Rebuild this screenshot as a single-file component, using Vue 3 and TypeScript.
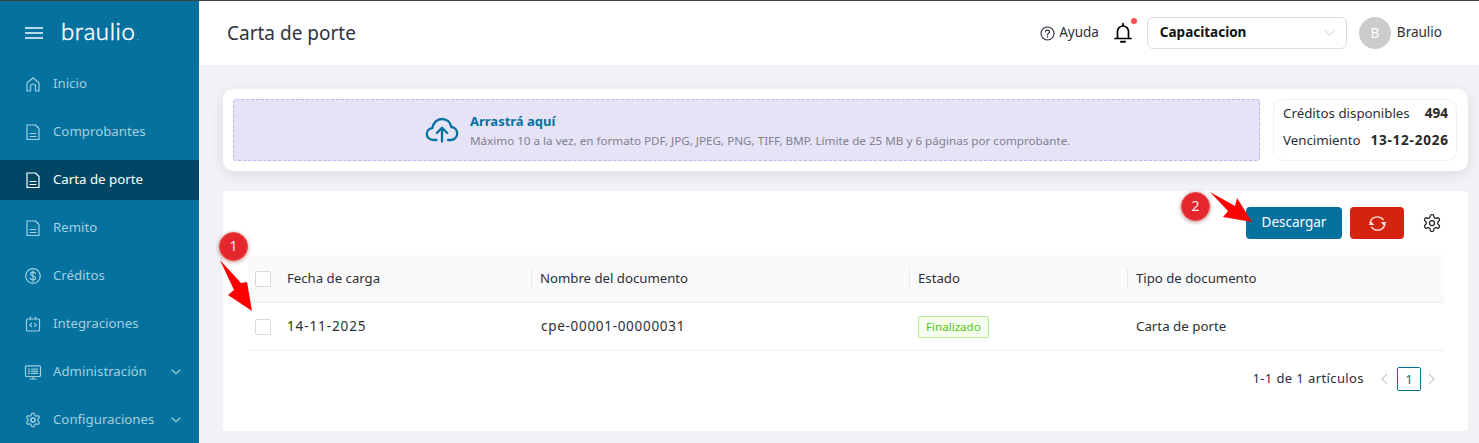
<script setup lang="ts">
interface NavItem { label: string; icon: string; active?: boolean; caret?: boolean }
const nav: NavItem[] = [
  { label: 'Inicio', icon: 'home' },
  { label: 'Comprobantes', icon: 'doc' },
  { label: 'Carta de porte', icon: 'doc', active: true },
  { label: 'Remito', icon: 'doc' },
  { label: 'Créditos', icon: 'dollar' },
  { label: 'Integraciones', icon: 'code' },
  { label: 'Administración', icon: 'admin', caret: true },
  { label: 'Configuraciones', icon: 'gear', caret: true },
]
const gearPath = 'M12.220 2h-.44a2 2 0 0 0-2 2v.18a2 2 0 0 1-1 1.730l-.43.25a2 2 0 0 1-2 0l-.15-.08a2 2 0 0 0-2.730.73l-.22.38a2 2 0 0 0 .73 2.730l.15.1a2 2 0 0 1 1 1.720v.51a2 2 0 0 1-1 1.740l-.15.09a2 2 0 0 0-.73 2.730l.22.38a2 2 0 0 0 2.730.73l.15-.08a2 2 0 0 1 2 0l.43.25a2 2 0 0 1 1 1.730V20a2 2 0 0 0 2 2h.44a2 2 0 0 0 2-2v-.18a2 2 0 0 1 1-1.730l.43-.25a2 2 0 0 1 2 0l.15.08a2 2 0 0 0 2.730-.73l.22-.39a2 2 0 0 0-.73-2.730l-.15-.08a2 2 0 0 1-1-1.740v-.5a2 2 0 0 1 1-1.740l.15-.09a2 2 0 0 0 .73-2.730l-.22-.38a2 2 0 0 0-2.730-.73l-.15.08a2 2 0 0 1-2 0l-.43-.25a2 2 0 0 1-1-1.730V4a2 2 0 0 0-2-2z'
</script>

<template>
  <div class="page">
    <aside class="sidebar">
      <div class="brand">
        <div class="burger"><span></span><span></span><span></span></div>
        <span class="logo">braulio<i>.</i></span>
      </div>
      <nav class="nav">
        <div v-for="item in nav" :key="item.label" class="nav-item" :class="{ active: item.active }">
          <svg v-if="item.icon === 'gear'" class="nav-icon" viewBox="-2.400 -2.400 28.800 28.800" fill="none" stroke="currentColor" stroke-width="1.700" stroke-linejoin="round">
            <path :d="gearPath" />
            <circle cx="12" cy="12" r="3" stroke-width="2.200" />
          </svg>
          <svg v-else class="nav-icon" viewBox="0 0 20 20" fill="none" stroke="currentColor" stroke-width="1.200" stroke-linejoin="round" stroke-linecap="round">
            <template v-if="item.icon === 'home'">
              <path d="M4 17V9L10 3.800 16 9v8h-3.500v-4.500a2.500 2.500 0 0 0-5 0V17z" />
            </template>
            <template v-else-if="item.icon === 'doc'">
              <path d="M4 3h8.500L16 6.500V17.500H4z" />
              <path d="M7 11.500h6M7 14.500h6" />
            </template>
            <template v-else-if="item.icon === 'dollar'">
              <circle cx="10" cy="10" r="7.300" />
              <path d="M12.500 7.500C12 6.500 11 6.200 10 6.200c-1.500 0-2.500.7-2.500 1.900 0 2.700 5.100 1.100 5.100 3.800 0 1.200-1.100 1.900-2.600 1.900-1.200 0-2.300-.4-2.800-1.500M10 4.800v10.400" />
            </template>
            <template v-else-if="item.icon === 'code'">
              <rect x="3.500" y="5" width="13" height="12" rx="1" />
              <path d="M7.500 5V3M12.500 5V3M8.500 9.500L6.800 11l1.700 1.500M11.500 9.500l1.700 1.500-1.700 1.500" />
            </template>
            <template v-else>
              <rect x="2.500" y="3.800" width="15" height="10.700" rx="1" />
              <path d="M7 17h6M10 14.500V17M5.500 7h1M8.500 7h6M5.500 9.200h1M8.500 9.200h6M5.500 11.400h1M8.500 11.400h6" />
            </template>
          </svg>
          <span class="nav-label">{{ item.label }}</span>
          <svg v-if="item.caret" class="caret" viewBox="0 0 12 12" fill="none" stroke="currentColor" stroke-width="1.500" stroke-linecap="round" stroke-linejoin="round"><path d="M2 4l4 3.800L10 4" /></svg>
        </div>
      </nav>
    </aside>

    <div class="main">
      <header class="header">
        <h1 class="title">Carta de porte</h1>
        <div class="header-tools">
          <div class="help">
            <svg class="help-icon" viewBox="0 0 16 16" fill="none" stroke="currentColor" stroke-width="1.200" stroke-linecap="round"><circle cx="8" cy="8" r="6.900" /><path d="M5.900 6.300C6 5 7 4.400 8 4.400c1.200 0 2.100.8 2.100 1.800 0 1.500-2.100 1.600-2.100 3.200" /><path d="M8 11.500v.1" stroke-width="1.500" /></svg>
            <span class="lift">Ayuda</span>
          </div>
          <div class="bell">
            <svg viewBox="0 0 18 22" fill="none" stroke="#000" stroke-width="1.700" stroke-linecap="round" stroke-linejoin="round"><path d="M9 1.500v2M3.500 16V9.500a5.500 5.500 0 0 1 11 0V16M1 16.500h16" /><path d="M7 19.700h4" stroke-width="2" /></svg>
            <span class="bell-dot"></span>
          </div>
          <div class="select">
            <span class="lift">Capacitacion</span>
            <svg viewBox="0 0 12 8" fill="none" stroke="#c4c4c4" stroke-width="1"><path d="M1 1.500l5 5 5-5" /></svg>
          </div>
          <div class="user">
            <span class="avatar">B</span>
            <span class="lift">Braulio</span>
          </div>
        </div>
      </header>

      <div class="content">
        <section class="upload-card">
          <div class="dropzone">
            <svg class="cloud" viewBox="0 0 34 26" fill="none" stroke="#04719f" stroke-width="2.300" stroke-linecap="round" stroke-linejoin="round"><path d="M11.500 23H8.500C4.500 23 1.800 20.300 1.800 17c0-3.200 2.400-5.500 5.500-5.800C8 6 12 2 17 2c4.800 0 8.500 3.300 9.300 8 3.300.3 5.900 3 5.900 6.500 0 3.600-2.900 6.500-6.500 6.500H23" /><path d="M17 24.500V11M11.800 16L17 10.800 22.200 16" /></svg>
            <div class="drop-text">
              <strong>Arrastrá aquí</strong>
              <span>Máximo 10 a la vez, en formato PDF, JPG, JPEG, PNG, TIFF, BMP. Límite de 25 MB y 6 páginas por comprobante.</span>
            </div>
          </div>
          <div class="credits">
            <div class="credit-row"><span>Créditos disponibles</span><b>494</b></div>
            <div class="credit-row"><span>Vencimiento</span><b class="num">13-12-2026</b></div>
          </div>
        </section>

        <section class="table-card">
          <div class="toolbar">
            <button class="btn primary"><span class="lift">Descargar</span></button>
            <button class="btn danger" aria-label="Actualizar">
              <svg viewBox="0 0 20 18" fill="none" stroke="#fde4e0" stroke-width="1.500" stroke-linecap="round"><path d="M2.200 8.200C3 4.500 6.200 2 10 2c2.600 0 4.700 1.100 6 3" /><path d="M17.800 9.800C17 13.500 13.800 16 10 16c-2.600 0-4.700-1.100-6-3" /><path d="M13.500 7.300h6L16.500 10.800z" fill="#fde4e0" stroke="none" /><path d="M.5 10.700h6L3.500 7.200z" fill="#fde4e0" stroke="none" /></svg>
            </button>
            <svg class="settings" viewBox="0 0 24 24" fill="none" stroke="#222" stroke-width="1.500" stroke-linejoin="round"><path :d="gearPath" /><circle cx="12" cy="12" r="3" /></svg>
          </div>

          <div class="table">
            <div class="row head">
              <div class="cell check"><span class="checkbox"></span></div>
              <div class="cell"><span class="lift">Fecha de carga</span></div>
              <div class="cell sep"><span class="lift">Nombre del documento</span></div>
              <div class="cell sep"><span class="lift">Estado</span></div>
              <div class="cell sep"><span class="lift">Tipo de documento</span></div>
            </div>
            <div class="row body">
              <div class="cell check"><span class="checkbox"></span></div>
              <div class="cell"><span class="lift num">14-11-2025</span></div>
              <div class="cell indent wide"><span class="lift code">cpe-00001-00000031</span></div>
              <div class="cell indent"><span class="tag">Finalizado</span></div>
              <div class="cell indent"><span class="lift tight">Carta de porte</span></div>
            </div>
          </div>

          <div class="pager">
            <span class="pager-total lift">1-1 de 1 artículos</span>
            <svg class="pager-arrow" viewBox="0 0 8 12" fill="none" stroke="#c8c8c8" stroke-width="1.100"><path d="M7 1L2 6l5 5" /></svg>
            <span class="pager-page">1</span>
            <svg class="pager-arrow" viewBox="0 0 8 12" fill="none" stroke="#c8c8c8" stroke-width="1.100"><path d="M1 1l5 5-5 5" /></svg>
          </div>
        </section>
      </div>
    </div>

    <span class="badge badge-1">1</span>
    <svg class="arrow arrow-1" viewBox="0 0 34 53"><path d="M1 1L22 24 28 23 33 52 9 36 15 31z" fill="#fe0000" /></svg>
    <span class="badge badge-2">2</span>
    <svg class="arrow arrow-2" viewBox="0 0 44 33"><path d="M1 2L26 16 28 8 43 32 14 27 19 21z" fill="#fe0000" /></svg>
  </div>
</template>

<style>
html, body { margin: 0; background: #f0f2f5; }
</style>

<style scoped>
.page {
  position: relative;
  display: flex;
  width: 1479px;
  height: 443px;
  overflow: hidden;
  border-top: 1px solid #3c423d;
  box-sizing: border-box;
  background: #f0f2f5;
  color: #2a2f3a;
  font-family: "Noto Sans", "Liberation Sans", sans-serif;
  font-size: 13px;
}
.lift { display: inline-block; transform: translateY(-1px); }
.sidebar {
  flex: 0 0 199px;
  background: #04719f;
  color: #a3cfe0;
}
.brand {
  display: flex;
  align-items: center;
  height: 63px;
  padding-left: 25px;
}
.burger {
  display: flex;
  flex-direction: column;
  gap: 3px;
  width: 18px;
}
.burger span { height: 2px; background: #b5dbe9; }
.logo {
  margin: 0 0 4px 18px;
  font-family: "Lato", sans-serif;
  font-size: 24px;
  font-weight: 300;
  letter-spacing: 0.6px;
  color: #fff;
  -webkit-text-stroke: 0.5px #fff;
}
.logo i { font-style: normal; font-size: 11px; color: #a3cfe0; -webkit-text-stroke: 0; margin-left: 1px; }
.nav { display: flex; flex-direction: column; gap: 8px; }
.nav-item {
  display: flex;
  align-items: center;
  height: 40px;
  padding: 0 17px 0 23px;
}
.nav-item.active { background: #004766; color: #fff; }
.nav-icon { width: 20px; height: 20px; flex: none; margin-right: 10px; overflow: visible; }
.nav-label { flex: 1; font-size: 13.250px; padding-bottom: 2px; }
.caret { width: 12px; height: 12px; color: #8ec0d5; }

.main { flex: 1; min-width: 0; display: flex; flex-direction: column; }
.header {
  display: flex;
  align-items: center;
  justify-content: space-between;
  flex: 0 0 64px;
  box-sizing: border-box;
  padding: 0 37px 0 28px;
  background: #fff;
}
.title { margin: 0 0 1px; font-size: 19px; font-weight: 400; color: #2f3440; }
.header-tools { display: flex; align-items: center; }
.help { display: flex; align-items: center; gap: 4px; font-size: 13.500px; color: #2a2f3a; }
.help-icon { width: 15px; height: 15px; }
.bell { position: relative; width: 18px; height: 22px; margin: 0 15px 0 15px; }
.bell svg { width: 18px; height: 22px; display: block; }
.bell-dot {
  position: absolute;
  top: -4px;
  right: -5px;
  width: 6px;
  height: 6px;
  border-radius: 50%;
  background: #ff4d4f;
}
.select {
  display: flex;
  align-items: center;
  justify-content: space-between;
  box-sizing: border-box;
  width: 200px;
  height: 32px;
  padding: 0 11px 0 12px;
  border: 1px solid #dcdcdc;
  border-radius: 6px;
  font-size: 13.500px;
  font-weight: 700;
  color: #111;
}
.select svg { width: 11px; height: 8px; }
.user { display: flex; align-items: center; gap: 6px; margin-left: 12px; font-size: 13.500px; color: #2a2f3a; }
.avatar {
  display: flex;
  align-items: center;
  justify-content: center;
  width: 32px;
  height: 32px;
  border-radius: 50%;
  background: #cccccc;
  color: #fff;
}

.content {
  flex: 1;
  display: flex;
  flex-direction: column;
  gap: 20px;
  padding: 24px 11px 12px 24px;
}
.upload-card {
  display: flex;
  gap: 13px;
  box-sizing: border-box;
  height: 82px;
  padding: 10px 11px 10px 10px;
  background: #fff;
  border-radius: 10px;
  box-shadow: 0 4px 14px rgba(0, 0, 0, 0.09);
}
.dropzone {
  flex: 1;
  display: flex;
  align-items: center;
  box-sizing: border-box;
  padding-left: 191px;
  background: #e7e3f7;
  border: 1px dashed #c3b4f5;
  border-radius: 3px;
}
.cloud { width: 34px; height: 26px; margin-right: 11px; flex: none; }
.drop-text { display: flex; flex-direction: column; gap: 3px; }
.drop-text strong { font-size: 13px; font-weight: 700; color: #04719f; }
.drop-text span { font-size: 11.650px; color: #7d8290; white-space: nowrap; }
.credits {
  flex: 0 0 184px;
  box-sizing: border-box;
  display: flex;
  flex-direction: column;
  justify-content: center;
  gap: 9px;
  padding: 0 8px 8px 9px;
  border: 1px solid #f0f0f0;
  border-radius: 10px;
  font-size: 13.300px;
}
.credit-row { display: flex; justify-content: space-between; white-space: nowrap; line-height: 18px; }
.credit-row b { font-weight: 700; color: #2a2a2a; font-size: 13.500px; }
.credit-row b.num { letter-spacing: 0.8px; margin-right: -0.8px; }

.table-card {
  flex: 1;
  box-sizing: border-box;
  padding: 16px 24px 0 25px;
  background: #fff;
  border-radius: 4px;
}
.toolbar {
  display: flex;
  align-items: center;
  justify-content: flex-end;
  height: 32px;
  margin-bottom: 16px;
  padding-right: 1px;
}
.btn {
  height: 32px;
  border: none;
  border-radius: 4px;
  color: #fff;
  font: inherit;
  font-size: 13.500px;
  display: flex;
  align-items: center;
  justify-content: center;
  padding: 0;
}
.btn.primary { width: 96px; background: #04719f; margin-right: 8px; }
.btn.danger { width: 54px; background: #d4230f; }
.btn.danger svg { width: 19px; height: 17px; }
.settings { width: 20px; height: 20px; margin: 0 1px 0 18px; }

.row {
  display: grid;
  grid-template-columns: 31px 252px 378px 218px 1fr;
  align-items: center;
  border-bottom: 1px solid #eeeeee;
}
.row.head { height: 48px; background: #fafafa; box-sizing: border-box; }
.row.head .cell { font-size: 13.200px; }
.row.body { height: 48px; box-sizing: border-box; }
.cell { padding-left: 8px; font-size: 13.500px; white-space: nowrap; }
.cell.indent { padding-left: 9px; }
.cell.wide { padding-left: 10px; }
.cell.sep { padding-left: 8px; border-left: 1px solid #ebebeb; line-height: 22px; }
.cell.check { display: flex; padding-left: 7px; }
.num { letter-spacing: 0.9px; }
.code { letter-spacing: 0.7px; }
.tight { font-size: 13.300px; }
.checkbox {
  width: 16px;
  height: 16px;
  box-sizing: border-box;
  background: #fff;
  border: 1px solid #d9d9d9;
  border-radius: 2px;
}
.tag {
  display: inline-block;
  box-sizing: border-box;
  height: 22px;
  padding: 0 7px;
  line-height: 20px;
  border: 1px solid #b7eb8f;
  border-radius: 2px;
  background: #f6ffed;
  color: #52c41a;
  font-size: 11.600px;
}
.pager {
  display: flex;
  align-items: center;
  justify-content: flex-end;
  margin-top: 17px;
  height: 22px;
  padding-right: 4px;
}
.pager-total { font-size: 13px; margin-right: 16px; letter-spacing: 0.4px; }
.pager-arrow { width: 8px; height: 12px; margin: 0 4px 0 0; }
.pager-page {
  box-sizing: border-box;
  width: 24px;
  height: 24px;
  margin: 0 7px 0 5px;
  border: 1px solid #04719f;
  border-radius: 2px;
  color: #04719f;
  text-align: center;
  line-height: 22px;
  font-size: 13px;
}

.badge {
  position: absolute;
  width: 29px;
  height: 29px;
  border-radius: 50%;
  background: #e4272d;
  border: 1px solid #f04a4a;
  box-sizing: border-box;
  box-shadow: 0 1px 4px rgba(120, 0, 0, 0.45);
  color: #ffe9e9;
  font-size: 14px;
  line-height: 26px;
  text-align: center;
}
.badge-1 { left: 219px; top: 231px; }
.badge-2 { left: 1181px; top: 191px; }
.arrow { position: absolute; }
.arrow-1 { left: 219px; top: 258px; width: 34px; height: 53px; }
.arrow-2 { left: 1209px; top: 189px; width: 44px; height: 33px; }
</style>
